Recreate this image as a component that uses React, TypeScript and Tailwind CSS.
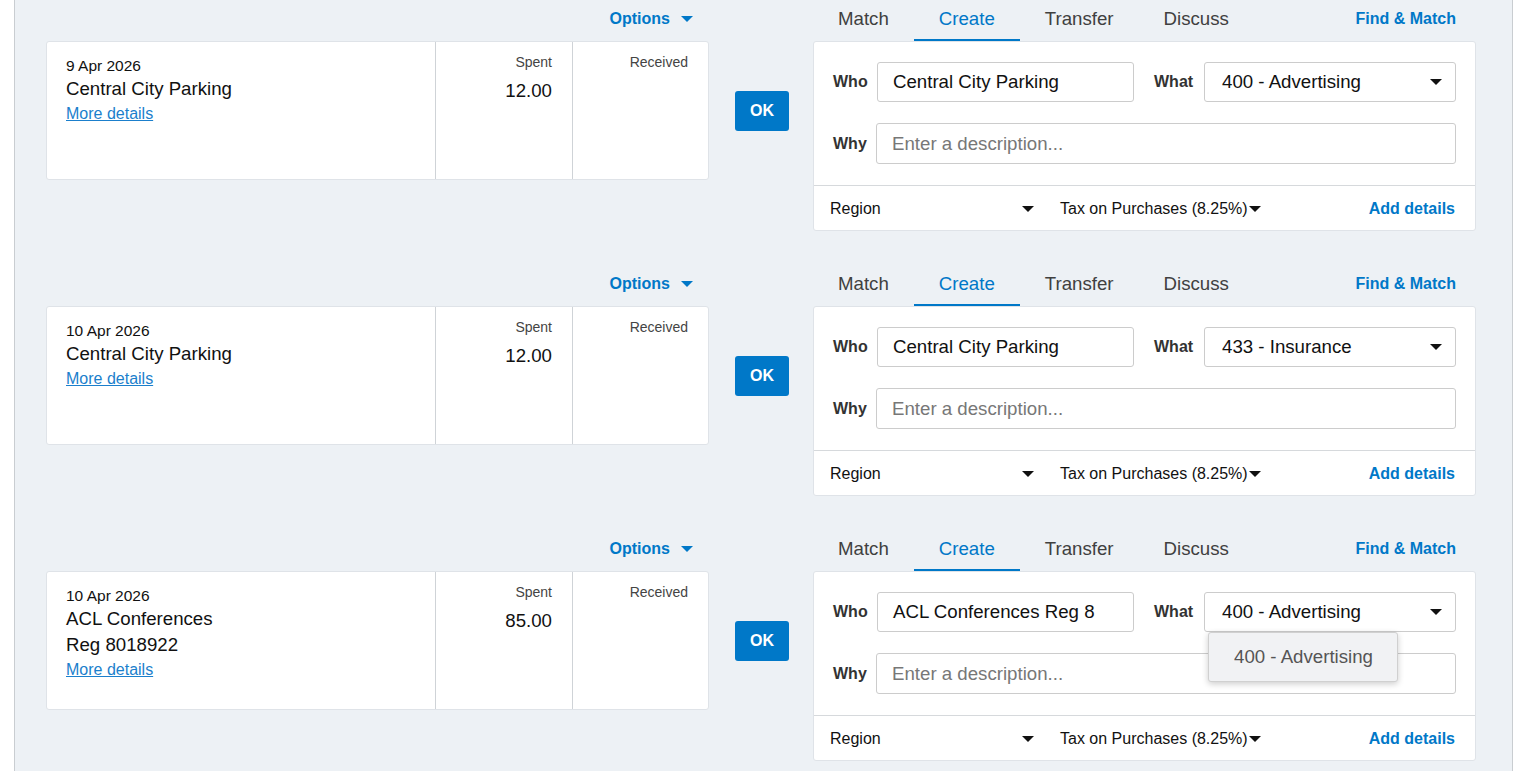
// Bank reconciliation rows: statement line on the left, OK button, and the Create form on the right.
import React from "react";

type Line = {
  date: string;
  name: string[];
  spent: string;
  who: string;
  what: string;
  menuOpen?: boolean;
};

const lines: Line[] = [
  { date: "9 Apr 2026", name: ["Central City Parking"], spent: "12.00", who: "Central City Parking", what: "400 - Advertising" },
  { date: "10 Apr 2026", name: ["Central City Parking"], spent: "12.00", who: "Central City Parking", what: "433 - Insurance" },
  {
    date: "10 Apr 2026",
    name: ["ACL Conferences", "Reg 8018922"],
    spent: "85.00",
    who: "ACL Conferences Reg 8",
    what: "400 - Advertising",
    menuOpen: true,
  },
];

function Caret({ className = "" }: { className?: string }) {
  return (
    <svg width="12" height="6" viewBox="0 0 12 6" className={className}>
      <path d="M0 0h12L6 6z" fill="currentColor" />
    </svg>
  );
}

function Statement({ line }: { line: Line }) {
  return (
    <div className="w-[663px]">
      <div className="flex h-[41px] items-start justify-end pr-[16px] pt-[9px]">
        <button className="flex h-[20px] items-center gap-[11px] text-[16px] font-bold leading-[20px] text-[#0078c8]">
          Options
          <Caret />
        </button>
      </div>
      <div className="flex h-[139px] rounded-[3px] border border-[#dfe3e8] bg-white">
        <div className="w-[388px] pl-[19px] pt-[14px]">
          <div className="text-[15.5px] leading-[20px] text-[#111]">{line.date}</div>
          {line.name.map((n) => (
            <div key={n} className="text-[18.67px] leading-[26px] text-[#111]">
              {n}
            </div>
          ))}
          <a href="#" className="text-[16px] leading-[24px] text-[#1b7fcc] underline">
            More details
          </a>
        </div>
        <div className="w-[137px] border-l border-[#cfd3d7] pr-[20px] pt-[12px] text-right">
          <div className="text-[14px] leading-[16px] text-[#444]">Spent</div>
          <div className="mt-[8px] text-[18.67px] leading-[26px] text-[#111]">{line.spent}</div>
        </div>
        <div className="flex-1 border-l border-[#cfd3d7] pr-[20px] pt-[12px] text-right">
          <div className="text-[14px] leading-[16px] text-[#444]">Received</div>
        </div>
      </div>
    </div>
  );
}

const tabs = ["Match", "Create", "Transfer", "Discuss"];

function CreateForm({ line }: { line: Line }) {
  return (
    <div className="w-[663px]">
      <div className="flex h-[41px] items-start">
        {tabs.map((t) => (
          <div
            key={t}
            className={
              t === "Create"
                ? "h-[41px] border-b-2 border-[#0078c8] px-[25px] pt-[8px] text-[18.67px] leading-[22px] text-[#0078c8]"
                : "h-[41px] px-[25px] pt-[8px] text-[18.67px] leading-[22px] text-[#404040]"
            }
          >
            {t}
          </div>
        ))}
        <a href="#" className="ml-auto pr-[20px] pt-[9px] text-[16px] font-bold leading-[20px] text-[#0078c8]">
          Find &amp; Match
        </a>
      </div>
      <div className="rounded-[3px] border border-[#dfe3e8] bg-white">
        <div className="px-[19px] pb-[21px] pt-[20px]">
          <div className="flex h-[40px] items-center">
            <div className="w-[44px] text-[16px] font-bold text-[#333]">Who</div>
            <div className="flex h-[40px] w-[257px] items-center rounded-[3px] border border-[#ccc] px-[15px] text-[18.67px] text-[#111]">
              {line.who}
            </div>
            <div className="ml-[20px] w-[50px] text-[16px] font-bold text-[#333]">What</div>
            <div className="relative flex-1">
              <div className="flex h-[40px] items-center justify-between rounded-[3px] border border-[#ccc] pl-[17px] pr-[13px] text-[18.67px] text-[#111]">
                {line.what}
                <Caret className="text-[#111]" />
              </div>
              {line.menuOpen && (
                <div className="absolute left-[4px] top-full z-10 flex h-[50px] w-[190px] items-center rounded-[3px] border border-[#d0d0d0] bg-[#f1f2f4] pl-[25px] text-[18.67px] text-[#555] shadow-[0_2px_6px_rgba(0,0,0,0.2)]">
                  {line.what}
                </div>
              )}
            </div>
          </div>
          <div className="mt-[21px] flex h-[41px] items-center">
            <div className="w-[43px] text-[16px] font-bold text-[#333]">Why</div>
            <input
              placeholder="Enter a description..."
              className="h-[41px] flex-1 rounded-[3px] border border-[#ccc] px-[15px] text-[18.67px] text-[#111] outline-none placeholder:text-[#777]"
            />
          </div>
        </div>
        <div className="flex h-[45px] items-center border-t border-[#d6d9dc] pl-[16px] pr-[20px] pt-[1px] text-[16px] text-[#111]">
          <div className="flex w-[210px] items-center justify-between pr-[6px]">
            Region
            <Caret />
          </div>
          <div className="ml-[20px] flex items-center gap-[1px]">
            Tax on Purchases (8.25%)
            <Caret />
          </div>
          <a href="#" className="ml-auto font-bold text-[#0078c8]">
            Add details
          </a>
        </div>
      </div>
    </div>
  );
}

export default function App() {
  return (
    <div className="min-h-screen bg-white pl-[14px] pr-[23px] font-['Liberation_Sans',Arial,sans-serif]">
      <div className="min-h-screen border-x border-[#c9cdd1] bg-[#edf1f5] pl-[31px]">
        {lines.map((line, i) => (
          <div key={i} className="flex h-[265px]">
            <Statement line={line} />
            <div className="w-[104px] pl-[26px] pt-[41px]">
              <div className="flex h-[139px] items-center">
                <button className="h-[40px] w-[54px] rounded-[3px] bg-[#0078c8] text-[16px] font-bold text-white">
                  OK
                </button>
              </div>
            </div>
            <CreateForm line={line} />
          </div>
        ))}
      </div>
    </div>
  );
}
